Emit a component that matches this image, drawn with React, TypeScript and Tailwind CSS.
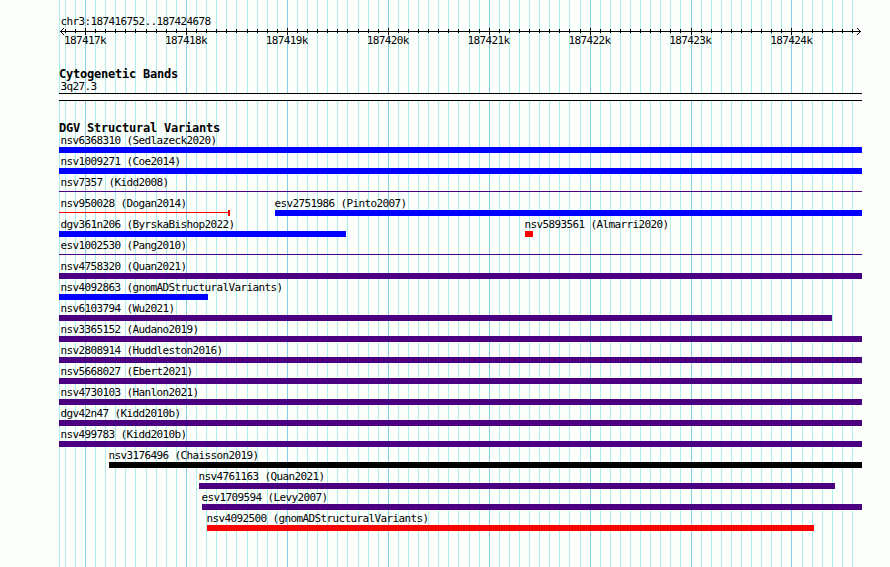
interface Variant {
  label: string;
  start: number;
  end: number;
  color: string;
  shape?: "bar" | "line" | "capped";
}

const LEFT = 59;
const RIGHT = 862;

const BLUE = "bg-[#0000ff]";
const INDIGO = "bg-[#4b0082]";
const RED = "bg-[#ff0000]";
const BLACK = "bg-black";

const rows: Variant[][] = [
  [{ label: "nsv6368310 (Sedlazeck2020)", start: LEFT, end: RIGHT, color: BLUE }],
  [{ label: "nsv1009271 (Coe2014)", start: LEFT, end: RIGHT, color: BLUE }],
  [{ label: "nsv7357 (Kidd2008)", start: LEFT, end: RIGHT, color: INDIGO, shape: "line" }],
  [
    { label: "nsv950028 (Dogan2014)", start: LEFT, end: 230, color: RED, shape: "capped" },
    { label: "esv2751986 (Pinto2007)", start: 275, end: RIGHT, color: BLUE },
  ],
  [
    { label: "dgv361n206 (ByrskaBishop2022)", start: LEFT, end: 346, color: BLUE },
    { label: "nsv5893561 (Almarri2020)", start: 525, end: 533, color: RED },
  ],
  [{ label: "esv1002530 (Pang2010)", start: LEFT, end: RIGHT, color: INDIGO, shape: "line" }],
  [{ label: "nsv4758320 (Quan2021)", start: LEFT, end: RIGHT, color: INDIGO }],
  [{ label: "nsv4092863 (gnomADStructuralVariants)", start: LEFT, end: 208, color: BLUE }],
  [{ label: "nsv6103794 (Wu2021)", start: LEFT, end: 832, color: INDIGO }],
  [{ label: "nsv3365152 (Audano2019)", start: LEFT, end: RIGHT, color: INDIGO }],
  [{ label: "nsv2808914 (Huddleston2016)", start: LEFT, end: RIGHT, color: INDIGO }],
  [{ label: "nsv5668027 (Ebert2021)", start: LEFT, end: RIGHT, color: INDIGO }],
  [{ label: "nsv4730103 (Hanlon2021)", start: LEFT, end: RIGHT, color: INDIGO }],
  [{ label: "dgv42n47 (Kidd2010b)", start: LEFT, end: RIGHT, color: INDIGO }],
  [{ label: "nsv499783 (Kidd2010b)", start: LEFT, end: RIGHT, color: INDIGO }],
  [{ label: "nsv3176496 (Chaisson2019)", start: 109, end: RIGHT, color: BLACK }],
  [{ label: "nsv4761163 (Quan2021)", start: 199, end: 835, color: INDIGO }],
  [{ label: "esv1709594 (Levy2007)", start: 202, end: RIGHT, color: INDIGO }],
  [{ label: "nsv4092500 (gnomADStructuralVariants)", start: 207, end: 814, color: RED }],
];

const tickLabels = ["187417k", "187418k", "187419k", "187420k", "187421k", "187422k", "187423k", "187424k"];

// one tick every 100 bp, a major one every 1 kb
const ticks = Array.from({ length: 79 }, (_, i) => ({
  x: Math.floor(65.35 + i * 10.092),
  major: i % 10 === 2,
}));

function GridLines() {
  return (
    <svg className="absolute inset-0" width="890" height="567" shapeRendering="crispEdges">
      <rect x={LEFT} y="0" width="1" height="567" fill="#afeeee" />
      {ticks.map((t) => (
        <rect key={t.x} x={t.x} y="0" width="1" height="567" fill={t.major ? "#87ceeb" : "#afeeee"} />
      ))}
    </svg>
  );
}

function Ruler() {
  return (
    <svg className="block" width="803" height="9" viewBox="59 27 803 9" shapeRendering="crispEdges">
      <rect x="60" y="31" width="801" height="1" />
      {ticks.map((t) => (
        <rect key={t.x} x={t.x} y={t.major ? 28 : 29} width="1" height={t.major ? 7 : 4} />
      ))}
      {[1, 2, 3].map((d) => (
        <g key={d}>
          <rect x={60 + d} y={31 - d} width="1" height="1" />
          <rect x={60 + d} y={31 + d} width="1" height="1" />
          <rect x={860 - d} y={31 - d} width="1" height="1" />
          <rect x={860 - d} y={31 + d} width="1" height="1" />
        </g>
      ))}
    </svg>
  );
}

function Glyph({ variant }: { variant: Variant }) {
  if (variant.shape === "line") {
    return (
      <div className="h-1.5 pt-0.5">
        <div className={`h-px ${variant.color}`} />
      </div>
    );
  }
  if (variant.shape === "capped") {
    return (
      <div className="flex h-1.5">
        <div className={`mt-0.5 h-px flex-1 ${variant.color}`} />
        <div className={`h-1.5 w-0.5 ${variant.color}`} />
      </div>
    );
  }
  return <div className={`h-1.5 ${variant.color}`} />;
}

function Row({ items }: { items: Variant[] }) {
  return (
    <div className="flex h-[21px]">
      {items.map((v, i) => (
        <div
          key={v.label}
          className="shrink-0"
          style={{ marginLeft: v.start - (i ? items[i - 1].end : LEFT), width: v.end - v.start }}
        >
          <div className={`h-[13px] whitespace-nowrap ${v.start === LEFT ? "pl-[1.5px]" : "-ml-[0.5px]"}`}>{v.label}</div>
          <Glyph variant={v} />
        </div>
      ))}
    </div>
  );
}

function Heading({ children }: { children: string }) {
  return <h2 className="h-[13px] text-[12px] font-bold leading-[13px] tracking-[-0.225px]">{children}</h2>;
}

export default function App() {
  return (
    <div className="relative h-[567px] w-[890px] overflow-hidden bg-[#fdfffc] font-['DejaVu_Sans_Mono',monospace] text-[11px] leading-[13px] tracking-[-0.623px] text-black">
      <GridLines />
      <main className="relative ml-[59px] flex w-[803px] flex-col pt-[15px]">
        <div className="h-3 pl-[1.5px]">chr3:187416752..187424678</div>
        <Ruler />
        <div className="-mt-0.5 flex h-[13px] pl-[5px]">
          {tickLabels.map((label) => (
            <span key={label} className="w-[100.9px] shrink-0">
              {label}
            </span>
          ))}
        </div>

        <section className="mt-[21px]">
          <Heading>Cytogenetic Bands</Heading>
          <div className="-mt-px h-[13px] pl-[1.5px]">3q27.3</div>
          <div className="h-2 border-y border-black bg-[#fdfffc]" />
        </section>

        <section className="mt-[21px]">
          <Heading>DGV Structural Variants</Heading>
          <div className="-mt-px">
            {rows.map((items) => (
              <Row key={items[0].label} items={items} />
            ))}
          </div>
        </section>
      </main>
    </div>
  );
}
